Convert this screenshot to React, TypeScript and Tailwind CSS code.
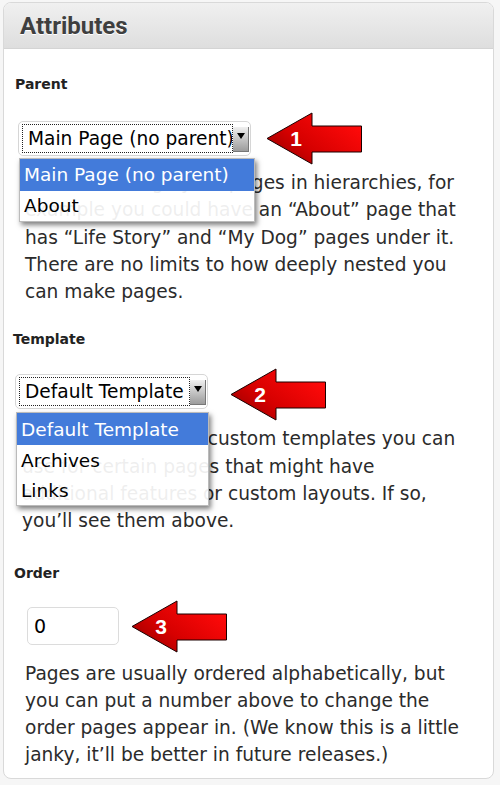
import React from 'react';

// Red callout arrow pointing left, with a white step number
const CalloutArrow = ({ n, id }: { n: string; id: string }) => (
  <svg width="97" height="53" viewBox="0 0 97 53" className="shrink-0">
    <defs>
      <linearGradient id={id} x1="0" y1="1" x2="1" y2="0.3">
        <stop offset="0" stopColor="#8c0000" />
        <stop offset="0.45" stopColor="#d60000" />
        <stop offset="1" stopColor="#ff0a0a" />
      </linearGradient>
    </defs>
    <path
      d="M1 26.5 L46 1 L46 14 L95.5 14 L95.5 40 L46 40 L46 52 Z"
      fill={`url(#${id})`}
      stroke="#1a0000"
      strokeWidth="1"
      strokeLinejoin="miter"
    />
    <text
      x="30"
      y="34"
      textAnchor="middle"
      fill="#fff"
      fontFamily="'Liberation Sans', Arial, sans-serif"
      fontWeight="700"
      fontSize="21"
    >
      {n}
    </text>
  </svg>
);

interface SelectProps {
  value: string;
  width: string;
  listWidth: string;
  listTop: string;
  options: string[];
}

const MacSelect: React.FC<SelectProps> = ({ value, width, listWidth, listTop, options }) => (
  <div className="relative">
    <div className={`flex items-center h-[35px] ${width} rounded-[5px] border border-[#d6d6d6] bg-white pl-[3px] pr-[1px]`}>
      <div className="flex-1 min-w-0 h-[29px] border border-dotted border-[#222] flex items-center pl-[5px] text-[18.6px] text-black whitespace-nowrap overflow-hidden">
        {value}
      </div>
      <div className="w-[16px] h-[25px] self-end mb-[3px] bg-linear-to-b from-[#f0f0f0] to-[#9c9c9c] border-r border-b border-[#777] flex justify-center pt-[6px]">
        <div className="w-0 h-0 border-l-[4px] border-r-[4px] border-t-[6px] border-l-transparent border-r-transparent border-t-black" />
      </div>
    </div>
    {/* open menu */}
    <ul className={`absolute left-[1px] ${listTop} ${listWidth} bg-white/[0.92] text-[18.5px] text-black shadow-[2px_3px_5px_rgba(0,0,0,0.5)] border border-[#bbb] z-10`}>
      {options.map((opt, i) => (
        <li
          key={opt}
          className={
            i === 0
              ? 'h-[32px] flex items-center pl-[4px] bg-[#3b76d9]/[0.96] text-white'
              : 'h-[30px] flex items-center pl-[4px]'
          }
        >
          {opt}
        </li>
      ))}
    </ul>
  </div>
);

export default function App() {
  return (
    <div className="min-h-[785px] bg-[#f6f6f6] pt-[2px] pl-[3px] font-['DejaVu_Sans',sans-serif]">
      <div className="w-[491px] h-[777px] rounded-[8px] border border-[#d9d9d9] bg-white overflow-hidden">
        {/* Header */}
        <div className="h-[46px] bg-linear-to-b from-[#f0f0f0] to-[#dedede] border-b border-[#d4d4d4] flex items-center pl-[16px]">
          <h2 className="font-['Roboto',sans-serif] text-[24px] font-bold text-[#3f3f3f] [text-shadow:0_1px_0_#fff]">Attributes</h2>
        </div>

        <div className="text-[#2b2b2b]">
          {/* Parent */}
          <div className="pt-[25px] pl-[11px] text-[14px] font-bold leading-[20px] text-[#222]">Parent</div>
          <div className="flex items-center mt-[18px] pl-[14px]">
            <MacSelect
              value="Main Page (no parent)"
              width="w-[233px]"
              listWidth="w-[236px]"
              listTop="top-[37px]"
              options={['Main Page (no parent)', 'About']}
            />
            <div className="ml-[15px]">
              <CalloutArrow n="1" id="arr1" />
            </div>
          </div>
          <p className="mt-[4px] pl-[21px] w-[463px] text-[18.6px] leading-[27.3px]">
            You can arrange your pages in hierarchies, for example you could have an “About” page that has “Life Story” and “My Dog” pages under it. There are no limits to how deeply nested you can make pages.
          </p>

          {/* Template */}
          <div className="mt-[24px] pl-[9px] text-[14px] font-bold leading-[20px] text-[#222]">Template</div>
          <div className="flex items-center mt-[19px] pl-[11px]">
            <div className="mb-[6px]">
              <MacSelect
                value="Default Template"
                width="w-[193px]"
                listWidth="w-[193px]"
                listTop="top-[38px]"
                options={['Default Template', 'Archives', 'Links']}
              />
            </div>
            <div className="ml-[22px]">
              <CalloutArrow n="2" id="arr2" />
            </div>
          </div>
          <p className="mt-[4px] pl-[18px] w-[463px] text-[18.6px] leading-[27.3px]">
            Some themes have custom templates you can use for certain pages that might have additional features or custom layouts. If so, you’ll see them above.
          </p>

          {/* Order */}
          <div className="mt-[28px] pl-[10px] text-[14px] font-bold leading-[20px] text-[#222]">Order</div>
          <div className="flex items-center mt-[17px] pl-[23px]">
            <div className="w-[92px] h-[38px] rounded-[5px] border border-[#dcdcdc] flex items-center pl-[6px] text-[19px] text-black">
              0
            </div>
            <div className="ml-[12px]">
              <CalloutArrow n="3" id="arr3" />
            </div>
          </div>
          <p className="mt-[7px] pl-[21px] w-[463px] text-[18.6px] leading-[27px]">
            Pages are usually ordered alphabetically, but you can put a number above to change the order pages appear in. (We know this is a little janky, it’ll be better in future releases.)
          </p>
        </div>
      </div>
    </div>
  );
}
